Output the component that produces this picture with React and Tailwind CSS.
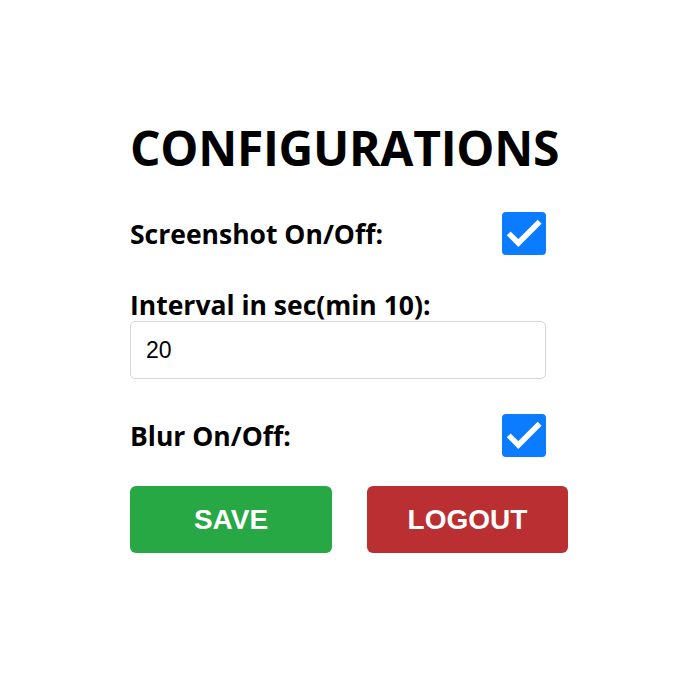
import React, { useState } from 'react'

function CheckBox({ checked, onChange }) {
    return (
        <button
            type="button"
            onClick={onChange}
            className={`w-[44px] h-[43px] rounded-[4px] flex items-center justify-center ${checked ? 'bg-[#0b7bff]' : 'bg-white border-2 border-gray-400'}`}
        >
            {checked && (
                <svg width="40" height="40" viewBox="0 0 24 24" fill="none">
                    <path d="M4 12.8l4.6 4.6L20.2 5.8" stroke="#fff" strokeWidth="3.3" strokeLinecap="square" />
                </svg>
            )}
        </button>
    )
}

function App() {
    const [screenshot, setScreenshot] = useState(true)
    const [blur, setBlur] = useState(true)
    const [interval, setIntervalValue] = useState('20')

    return (
        <div className="min-h-[690px] bg-white pl-[130px] pt-[118px] font-['Open_Sans',sans-serif] text-black">
            <h1 className="text-[48px] font-bold leading-[60px] tracking-[-0.3px]">CONFIGURATIONS</h1>

            <div className="w-[416px] h-[43px] flex items-center justify-between mt-[34px]">
                <span className="text-[26.5px] font-bold leading-[32px]">Screenshot On/Off:</span>
                <CheckBox checked={screenshot} onChange={() => setScreenshot(!screenshot)} />
            </div>

            <div className="w-[416px] mt-[34px]">
                <label className="block text-[26.5px] font-bold leading-[32px]">Interval in sec(min 10):</label>
                <input
                    value={interval}
                    onChange={(e) => setIntervalValue(e.target.value)}
                    className="w-full h-[58px] border border-[#d6d6d6] rounded-[5px] px-[15px] text-[23px] font-['Liberation_Sans',sans-serif] outline-none"
                />
            </div>

            <div className="w-[416px] h-[43px] flex items-center justify-between mt-[35px]">
                <span className="text-[26.5px] font-bold leading-[32px]">Blur On/Off:</span>
                <CheckBox checked={blur} onChange={() => setBlur(!blur)} />
            </div>

            <div className="flex gap-[35px] mt-[29px] font-['Liberation_Sans',sans-serif]">
                <button className="w-[202px] h-[67px] rounded-[6px] bg-[#28a745] text-white text-[28px] font-bold">SAVE</button>
                <button className="w-[201px] h-[67px] rounded-[6px] bg-[#b92f32] text-white text-[28px] font-bold">LOGOUT</button>
            </div>
        </div>
    )
}

export default App
